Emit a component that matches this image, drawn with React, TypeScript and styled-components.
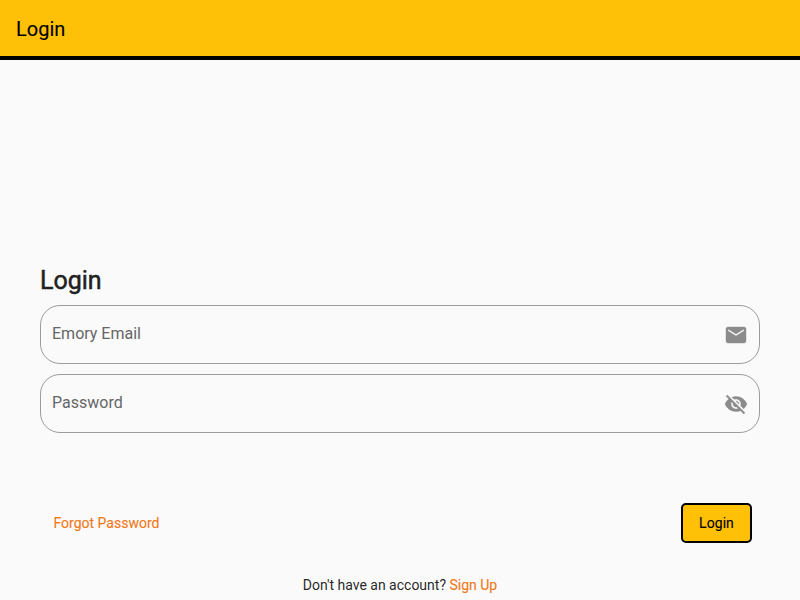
import React from "react";
import styled, { createGlobalStyle } from "styled-components";
import { MdEmail, MdVisibilityOff } from "react-icons/md";

const GlobalStyle = createGlobalStyle`
  * { box-sizing: border-box; }
  body { margin: 0; background: #fafafa; font-family: Roboto, sans-serif; color: rgba(0, 0, 0, 0.87); }
`;
const Page = styled.div`
  height: 600px;
  display: flex;
  flex-direction: column;
  overflow: hidden;
`;
const AppBar = styled.header`
  height: 60px;
  flex: none;
  display: flex;
  align-items: center;
  padding: 2px 16px 0;
  background: #ffc107;
  border-bottom: 4px solid #000;
  color: #000;
  font-size: 20px;
  font-weight: 400;
  -webkit-text-stroke: 0.1px currentColor;
`;
const Form = styled.form`
  display: flex;
  flex-direction: column;
  padding: 206px 40px 0;
`;
const Title = styled.h1`
  margin: 0 0 9px;
  height: 30px;
  line-height: 30px;
  font-size: 25px;
  font-weight: 400;
  color: #212121;
  -webkit-text-stroke: 0.5px #212121;
`;
const Field = styled.div`
  height: 59px;
  margin-bottom: 10px;
  padding: 0 11px;
  display: flex;
  align-items: center;
  justify-content: space-between;
  border: 1px solid #9c9c9c;
  border-radius: 20px;
  svg { color: #8b8b8b; }
  svg path:not([fill="none"]) { stroke: currentColor; stroke-width: 0.4px; }
`;
const Label = styled.span`
  padding-bottom: 2px;
  color: #666;
  font-size: 16px;
`;
const Actions = styled.div`
  display: flex;
  align-items: center;
  justify-content: space-between;
  margin-top: 60px;
  padding: 0 8px 0 13.5px;
`;
const Link = styled.a`
  color: #f07818;
  font-size: 14px;
  font-weight: 400;
  -webkit-text-stroke: 0.1px currentColor;
`;
const Submit = styled.button`
  width: 71px;
  height: 40px;
  padding: 0;
  border: 2px solid #000;
  border-radius: 5px;
  background: #ffc107;
  color: #000;
  font: 400 14px Roboto, sans-serif;
  letter-spacing: 0.05px;
  -webkit-text-stroke: 0.1px currentColor;
`;
const SignUp = styled.p`
  margin: 34px 0 0;
  text-align: center;
  font-size: 14px;
  line-height: 17px;
`;

export default function App() {
  return (
    <Page>
      <GlobalStyle />
      <AppBar>Login</AppBar>
      <Form>
        <Title>Login</Title>
        <Field><Label>Emory Email</Label><MdEmail size={24} /></Field>
        <Field><Label>Password</Label><MdVisibilityOff size={24} /></Field>
        <Actions><Link>Forgot Password</Link><Submit type="button">Login</Submit></Actions>
        <SignUp>Don't have an account? <Link>Sign Up</Link></SignUp>
      </Form>
    </Page>
  );
}
